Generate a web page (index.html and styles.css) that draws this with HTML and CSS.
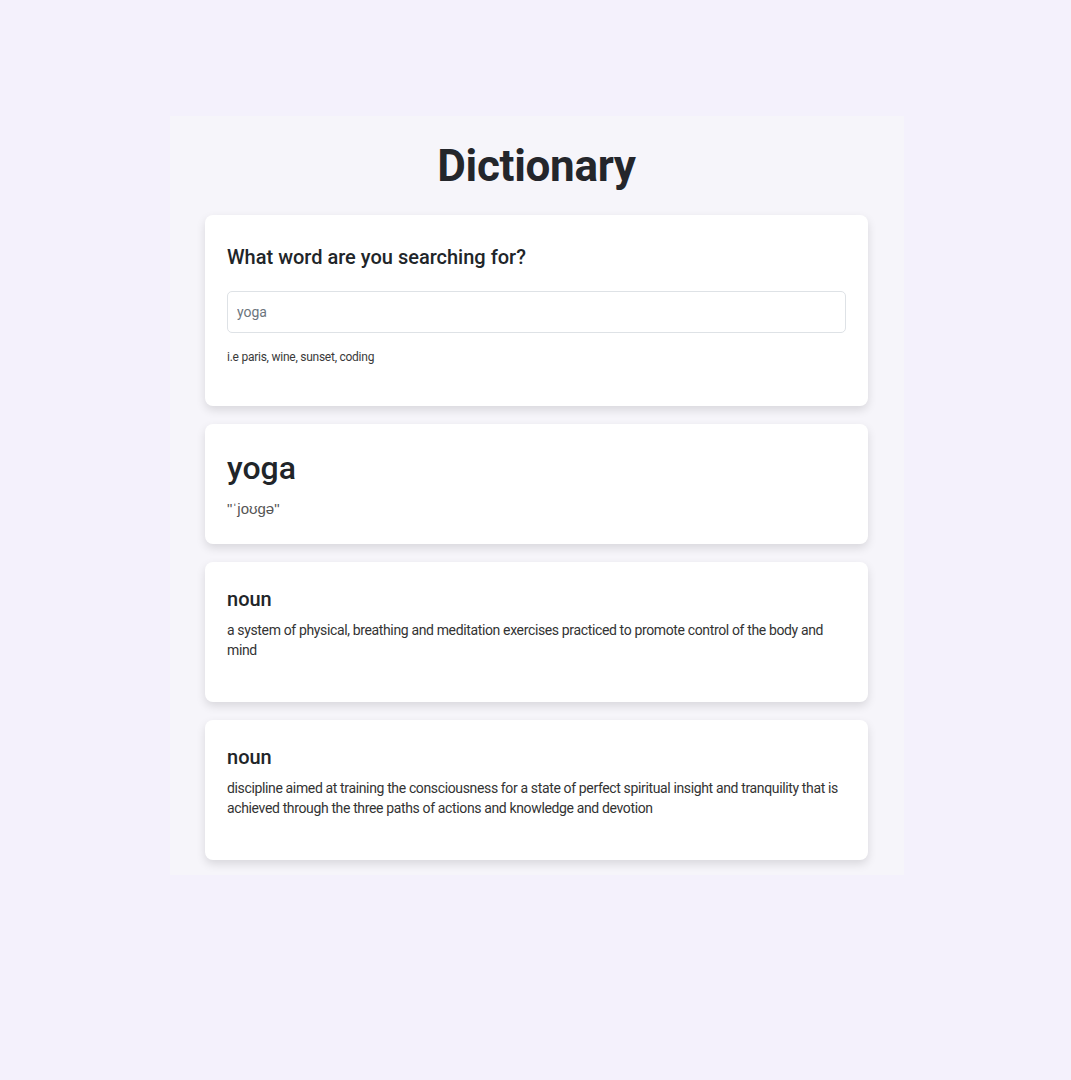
FILE: index.html
```html
<!DOCTYPE html>
<html lang="en">
<head>
<meta charset="utf-8">
<title>Dictionary</title>
<link rel="stylesheet" href="styles.css">
</head>
<body>
<div class="container">
  <h1 class="title">Dictionary</h1>
  <section class="card search-card">
    <h2 class="search-heading">What word are you searching for?</h2>
    <input class="search-input" type="search" placeholder="yoga">
    <div class="hint">i.e paris, wine, sunset, coding</div>
  </section>
  <section class="card word-card">
    <h2 class="word">yoga</h2>
    <div class="phonetic">"ˈjoʊɡə"</div>
  </section>
  <section class="card meaning-card">
    <h3 class="pos">noun</h3>
    <p class="definition">a system of physical, breathing and meditation exercises practiced to promote control of the body and mind</p>
  </section>
  <section class="card meaning-card">
    <h3 class="pos">noun</h3>
    <p class="definition">discipline aimed at training the consciousness for a state of perfect spiritual insight and tranquility that is achieved through the three paths of actions and knowledge and devotion</p>
  </section>
</div>
</body>
</html>
```
FILE: styles.css
```css
* { box-sizing: border-box; }
html, body { margin: 0; padding: 0; }
body {
  background: #f4f1fc;
  font-family: Roboto, "Noto Sans", sans-serif;
  color: #212529;
  padding-left: 3px;
}
.container {
  width: 734px;
  margin: 116px auto 0;
  padding: 24px 36px 15px 35px;
  background: #f6f5fa;
  display: flex;
  flex-direction: column;
  gap: 18px;
}
.title {
  margin: 0 0 5px;
  text-align: center;
  font-size: 44px;
  font-weight: 700;
  line-height: 52px;
  letter-spacing: -0.3px;
  color: #24262b;
}
.card {
  background: #fff;
  border-radius: 8px;
  box-shadow: 0 4px 10px rgba(0, 0, 0, 0.12);
  padding: 24px 22px 42px;
}
.search-card { padding-top: 27px; padding-bottom: 40px; }
.search-heading {
  margin: 0 0 19px;
  font-size: 20px;
  font-weight: 500;
  line-height: 30px;
  color: #212529;
}
.search-input {
  display: block;
  width: 100%;
  height: 42px;
  border: 1px solid #dee2e6;
  border-radius: 5px;
  padding: 0 9px;
  font-family: inherit;
  font-size: 14px;
  color: #212529;
  background: #fff;
  outline: none;
}
.search-input::placeholder { color: #6c757d; }
.hint {
  margin-top: 15px;
  font-size: 12px;
  letter-spacing: -0.25px;
  color: #3a3a3a;
  line-height: 18px;
}
.word-card { padding-top: 24px; padding-bottom: 25px; }
.word {
  margin: 0;
  font-size: 32px;
  font-weight: 500;
  line-height: 40px;
  color: #212529;
}
.phonetic {
  margin-top: 11px;
  font-family: "Liberation Sans", Arial, sans-serif;
  font-size: 15px;
  line-height: 20px;
  font-weight: 400;
  color: #555;
}
.pos {
  margin: 0;
  font-size: 20px;
  font-weight: 500;
  line-height: 26px;
  color: #212529;
}
.definition {
  margin: 8px 0 0;
  font-size: 14px;
  line-height: 20px;
  letter-spacing: -0.36px;
  color: #333;
}
```
